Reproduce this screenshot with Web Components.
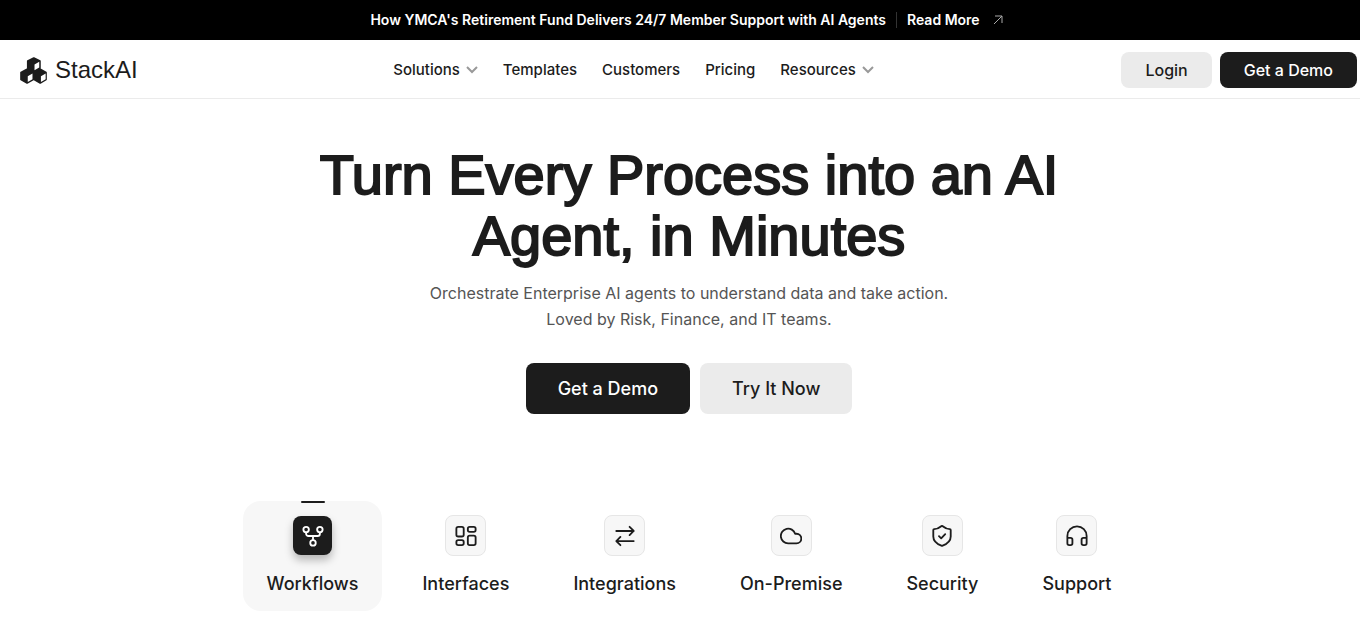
<!DOCTYPE html>
<html lang="en">
<head>
<meta charset="utf-8">
<meta name="viewport" content="width=device-width, initial-scale=1">
<title>StackAI</title>
<style>
  body { margin: 0; background: #fff; color: #1c1c1c; font-family: Inter, "Liberation Sans", sans-serif; --ink: #1c1c1c; --soft: #ebebeb; --panel: #f7f7f7; --shift: 18px; --display: "Liberation Sans", Arial, sans-serif; }
</style>
</head>
<body>
<stack-page></stack-page>

<script>
const define = (name, html, setup) => {
  const tpl = document.createElement('template');
  tpl.innerHTML = html;
  customElements.define(name, class extends HTMLElement {
    connectedCallback() {
      if (this.shadowRoot) return;
      this.attachShadow({ mode: 'open' }).append(tpl.content.cloneNode(true));
      if (setup) setup(this, this.shadowRoot);
    }
  });
};

const icons = {
  workflow: '<circle cx="4.500" cy="5" r="3"/><circle cx="19.500" cy="5" r="3"/><circle cx="12" cy="19.500" r="3"/><path d="M4.500 8v1.500a2.500 2.500 0 0 0 2.500 2.500h10a2.500 2.500 0 0 0 2.500-2.500V8M12 12v4.500"/>',
  grid: '<rect x="1.500" y="2" width="8" height="10.500" rx="2"/><rect x="14" y="2" width="8.500" height="5.500" rx="2"/><rect x="14" y="11.500" width="8.500" height="10.500" rx="2"/><rect x="1.500" y="16.500" width="8" height="5.500" rx="2"/>',
  arrows: '<path d="M2.500 6.500h19M17 2 21.500 6.500 17 11M21.500 17.500h-19M7 13 2.500 17.500 7 22"/>',
  cloud: '<path d="M18 20H9A8 8 0 1 1 16.500 9.500H18a5.250 5.250 0 0 1 0 10.500Z"/>',
  shield: '<path d="M21.500 12.500c0 5.500-4.200 8.200-8.800 10a2 2 0 0 1-1.400 0C6.700 20.700 2.500 18 2.500 12.500V5.500a1 1 0 0 1 1-1c2.400 0 5.500-1.400 7.700-3.200a1.300 1.300 0 0 1 1.600 0c2.200 1.800 5.300 3.200 7.700 3.200a1 1 0 0 1 1 1Z"/><path d="m8.700 12.200 2.400 2.300 4.400-4.500"/>',
  headphones: '<path d="M1.500 14h3.500a2 2 0 0 1 2 2v4a2 2 0 0 1-2 2H3.500a2 2 0 0 1-2-2v-8a10.500 10.500 0 0 1 21 0v8a2 2 0 0 1-2 2H19a2 2 0 0 1-2-2v-4a2 2 0 0 1 2-2H22.500"/>'
};

define('announcement-bar', `
<style>
  :host { display: block; background: #000; color: #fff; }
  p { margin: 0; min-height: 40px; padding-left: 14px; display: flex; align-items: center; justify-content: center; gap: 10px; font-size: 14px; line-height: 20px; font-weight: 600; }
  i { width: 1px; height: 16px; background: #333; }
  a { color: inherit; text-decoration: none; display: flex; align-items: center; gap: 12px; }
  svg { width: 12px; height: 12px; fill: none; stroke: #aaa; }
</style>
<p><slot></slot><i></i><a href="#read">Read More <svg viewBox="0 0 12 12" aria-hidden="true"><path d="M2 10 10 2M3 2h7v7"/></svg></a></p>`);

define('brand-logo', `
<style>
  :host { display: block; }
  a { display: flex; align-items: center; gap: 8px; color: var(--ink); text-decoration: none; font: 24px/28px var(--display); }
  svg { width: 27px; height: 27px; }
</style>
<a href="#home"><svg viewBox="0 0 80 80" aria-hidden="true">
  <path fill="#1c1c1c" stroke="#1c1c1c" stroke-width="5" stroke-linejoin="round" d="M41 3 59 12v22L41 43 23 34V12ZM21 36l18 10v21L21 77 3 67V46ZM60 36l17 10v21L60 77 42 67V46Z"/>
  <path fill="#fff" d="M43 22 57 14v17L43 39ZM23 57l14-8v17l-14 8ZM62 57l14-8v17l-14 8Z"/>
</svg><slot></slot></a>`);

define('nav-item', `
<style>
  :host { display: block; }
  a { display: flex; align-items: center; gap: 6px; color: var(--ink); text-decoration: none; font-size: 15px; line-height: 20px; font-weight: 500; }
  svg { display: none; width: 12px; height: 12px; fill: none; stroke: #999; stroke-width: 2; }
  :host([menu]) svg { display: block; }
</style>
<a href="#nav"><slot></slot><svg viewBox="0 0 12 12" aria-hidden="true"><path d="m1 3 5 5 5-5"/></svg></a>`);

define('action-button', `
<style>
  :host { display: block; }
  button { font: inherit; font-size: 16px; line-height: 20px; font-weight: 500; color: var(--ink); background: var(--soft); border: 0; border-radius: 8px; padding: 8px 24px; cursor: pointer; white-space: nowrap; }
  :host([dark]) button { background: var(--ink); color: #fff; }
  :host([large]) button { font-size: 18px; line-height: 27px; padding: 12px 32px; }
</style>
<button type="button"><slot></slot></button>`);

define('site-header', `
<style>
  :host { display: block; border-bottom: 1px solid #ebebeb; }
  header { display: flex; align-items: center; justify-content: space-between; padding: 12px 3px 10px 20px; }
  nav { display: flex; gap: 25px; padding-left: 8px; }
  div { display: flex; gap: 8px; }
</style>
<header>
  <brand-logo>StackAI</brand-logo>
  <nav><nav-item menu>Solutions</nav-item><nav-item>Templates</nav-item><nav-item>Customers</nav-item><nav-item>Pricing</nav-item><nav-item menu>Resources</nav-item></nav>
  <div><action-button>Login</action-button><action-button dark>Get a Demo</action-button></div>
</header>`);

define('hero-section', `
<style>
  :host { display: block; text-align: center; padding: 45px 0 0 var(--shift); }
  h1 { margin: 0 auto; max-width: 800px; font: 56px/61px var(--display); -webkit-text-stroke: 2px; color: var(--ink); }
  p { margin: 14px 0 31px; font-size: 16px; line-height: 26px; color: #555; }
  div { display: flex; justify-content: center; gap: 10px; }
</style>
<h1>Turn Every Process into an AI Agent, in Minutes</h1>
<p>Orchestrate Enterprise AI agents to understand data and take action. <br>Loved by Risk, Finance, and IT teams.</p>
<div><action-button large dark>Get a Demo</action-button><action-button large>Try It Now</action-button></div>`);

define('feature-tab', `
<style>
  :host { display: block; }
  button { position: relative; font: inherit; font-size: 18px; line-height: 24px; font-weight: 500; color: var(--ink); background: none; border: 0; border-radius: 18px; padding: 14px 24px 15px; display: flex; flex-direction: column; align-items: center; gap: 16px; cursor: pointer; }
  span { box-sizing: border-box; width: 41px; height: 41px; display: grid; place-items: center; background: var(--panel); border: 1px solid #e6e6e6; border-radius: 8px; }
  svg { width: 22px; height: 22px; fill: none; stroke: currentColor; stroke-width: 2; stroke-linecap: round; stroke-linejoin: round; }
  :host([selected]) button { background: var(--panel); }
  :host([selected]) button::before { content: ""; position: absolute; top: 0; left: 50%; width: 24px; height: 2px; margin-left: -12px; border-radius: 1px; background: var(--ink); }
  :host([selected]) span { width: 39px; height: 39px; margin: 1px; background: var(--ink); color: #fff; border: 0; box-shadow: 0 5px 8px #0004; }
</style>
<button type="button" role="tab"><span></span><slot></slot></button>`, (el, root) => {
  root.querySelector('span').innerHTML = '<svg viewBox="0 0 24 24" aria-hidden="true">' + icons[el.getAttribute('icon')] + '</svg>';
  root.querySelector('button').setAttribute('aria-selected', el.hasAttribute('selected'));
});

define('feature-tabs', `
<style>
  :host { display: block; padding: 87px 0 15px var(--shift); }
  div { display: flex; justify-content: center; gap: 16px; }
</style>
<div role="tablist"><slot></slot></div>`);

define('stack-page', `
<style>:host { display: block; }</style>
<announcement-bar>How YMCA's Retirement Fund Delivers 24/7 Member Support with AI Agents</announcement-bar>
<site-header></site-header>
<main>
  <hero-section></hero-section>
  <feature-tabs>
    <feature-tab icon="workflow" selected>Workflows</feature-tab>
    <feature-tab icon="grid">Interfaces</feature-tab>
    <feature-tab icon="arrows">Integrations</feature-tab>
    <feature-tab icon="cloud">On-Premise</feature-tab>
    <feature-tab icon="shield">Security</feature-tab>
    <feature-tab icon="headphones">Support</feature-tab>
  </feature-tabs>
</main>`);
</script>
</body>
</html>
